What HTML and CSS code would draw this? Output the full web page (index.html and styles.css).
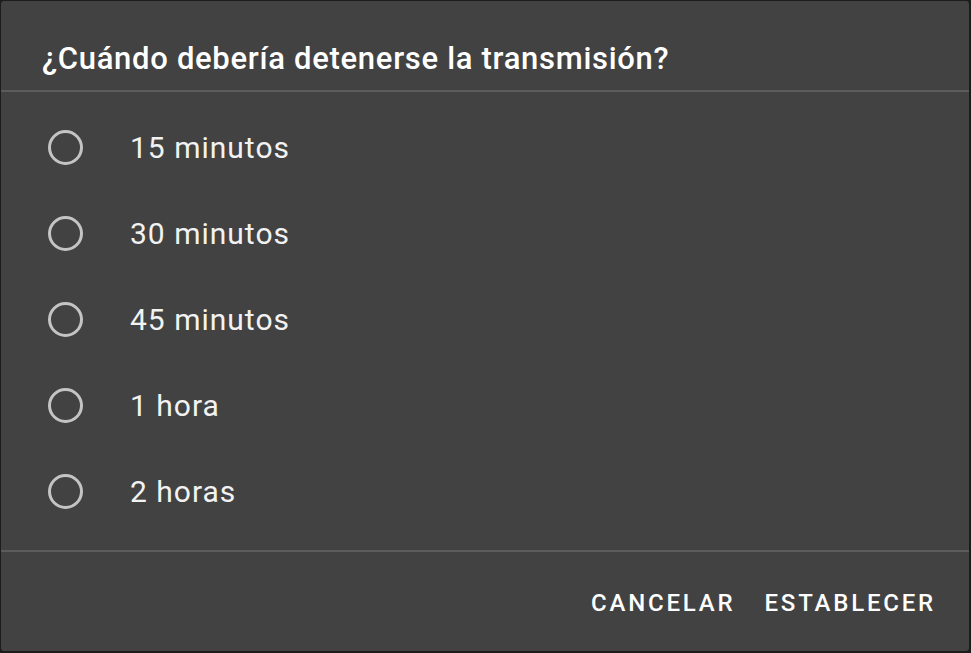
FILE: index.html
```html
<!DOCTYPE html>
<html lang="es">
<head>
<meta charset="UTF-8" />
<meta name="viewport" content="width=device-width, initial-scale=1.0" />
<title>Temporizador</title>
<link rel="stylesheet" href="styles.css">
</head>
<body>
<div class="dialog">
    <div class="dialog-title">¿Cuándo debería detenerse la transmisión?</div>

    <div class="option-list">
        <label class="option"><span class="radio"></span><span class="option-text">15 minutos</span></label>
        <label class="option"><span class="radio"></span><span class="option-text">30 minutos</span></label>
        <label class="option"><span class="radio"></span><span class="option-text">45 minutos</span></label>
        <label class="option"><span class="radio"></span><span class="option-text">1 hora</span></label>
        <label class="option"><span class="radio"></span><span class="option-text">2 horas</span></label>
    </div>

    <div class="dialog-actions">
        <button type="button" class="action-button">Cancelar</button>
        <button type="button" class="action-button">Establecer</button>
    </div>
</div>
</body>
</html>
```

FILE: styles.css
```css
html, body {
    height: 100%;
}
body {
    margin: 0;
    background-color: #1c1c1c;
    font-family: Roboto, 'Noto Sans', sans-serif;
    color: #ffffff;
    box-sizing: border-box;
    padding: 1px 2px 2px 1px;
}
.dialog {
    height: 100%;
    background-color: #424242;
    border-radius: 3px;
    display: flex;
    flex-direction: column;
}
.dialog-title {
    height: 91px;
    box-sizing: border-box;
    padding: 40px 0 0 41px;
    font-size: 31px;
    font-weight: 500;
    line-height: 36px;
    letter-spacing: 0.7px;
    border-bottom: 2px solid #5c5c5c;
}
.option-list {
    flex: 1;
    padding-top: 12px;
    border-bottom: 2px solid #5c5c5c;
}
.option {
    display: flex;
    align-items: center;
    height: 86px;
    padding-left: 47px;
    cursor: pointer;
}
.radio {
    width: 29px;
    height: 29px;
    border: 3px solid #c4c4c4;
    border-radius: 50%;
    flex-shrink: 0;
}
.option-text {
    margin-left: 47px;
    font-size: 30px;
    letter-spacing: 1px;
    color: #f2f2f2;
}
.dialog-actions {
    height: 99px;
    display: flex;
    justify-content: flex-end;
    align-items: center;
    padding: 3px 33px 0 0;
    box-sizing: border-box;
    gap: 29px;
}
.action-button {
    background: none;
    border: none;
    padding: 0;
    color: #ffffff;
    font-family: Roboto, 'Noto Sans', sans-serif;
    font-size: 24px;
    font-weight: 500;
    letter-spacing: 2.8px;
    text-transform: uppercase;
    cursor: pointer;
}
```
